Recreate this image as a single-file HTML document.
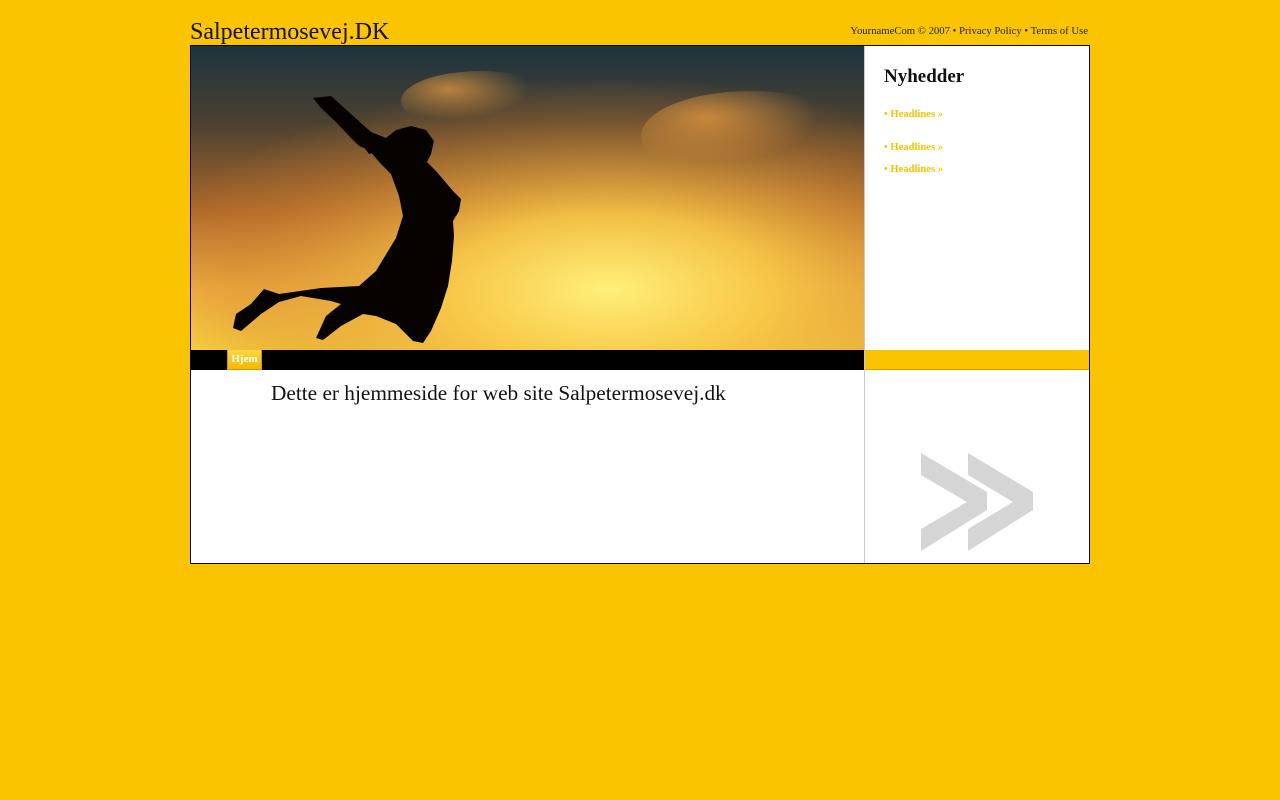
<!DOCTYPE html>
<html><head><meta charset="utf-8"><style>
*{margin:0;padding:0;box-sizing:border-box}
body{width:1280px;height:800px;background:#fac400;font-family:"Liberation Serif",serif;position:relative;overflow:hidden}
.abs{position:absolute}
#title{left:190px;top:17px;font-size:24px;color:#111;line-height:30px}
#links{left:700px;width:388px;text-align:right;top:25px;font-size:10.7px;color:#222}
#box{left:190px;top:45px;width:900px;height:519px;border:1px solid #000;background:#fff}
#img{left:191px;top:46px;width:673px;height:304px;overflow:hidden;background:linear-gradient(180deg,#1d3440 0%,#4a4030 25%,#b06a2a 55%,#f0b040 80%,#fbd640 100%)}
#nav{left:191px;top:350px;width:673px;height:20px;background:#000}
#tab{left:227px;top:350px;width:35px;height:20px;background:linear-gradient(#fcd640,#f5b800);border:1px solid #c89a00;border-top:none;color:#fff;font-weight:bold;font-size:11px;text-align:center;line-height:18px}
#ybar{left:865px;top:350px;width:224px;height:20px;background:#fac400;border-bottom:1px solid #d9a000}
#div{left:864px;top:46px;width:1px;height:517px;background:#c8c8c8}
#main{left:271px;top:381px;font-size:21.3px;color:#111}
#nyh{left:884px;top:66px;font-size:19px;font-weight:bold;color:#111}
.hl{left:884px;font-size:10.6px;font-weight:bold;color:#f7c300}
</style></head><body>
<div class="abs" id="title">Salpetermosevej.DK</div>
<div class="abs" id="links">YournameCom © 2007 • Privacy Policy • Terms of Use</div>
<div class="abs" id="box"></div>
<div class="abs" id="img">
<svg width="673" height="304" viewBox="0 0 673 304">
<defs><radialGradient id="sun" cx="0.62" cy="0.8" r="0.7"><stop offset="0" stop-color="#fff07a"/><stop offset="0.35" stop-color="#f8c848" stop-opacity="0.9"/><stop offset="0.8" stop-color="#d08030" stop-opacity="0.3"/><stop offset="1" stop-color="#d08030" stop-opacity="0"/></radialGradient>
<radialGradient id="c1" cx="0.3" cy="0.3" r="0.5"><stop offset="0" stop-color="#f0a040" stop-opacity="0.7"/><stop offset="1" stop-color="#f0a040" stop-opacity="0"/></radialGradient></defs>
<rect width="673" height="304" fill="url(#sun)"/>
<ellipse cx="290" cy="55" rx="80" ry="30" fill="url(#c1)"/>
<ellipse cx="560" cy="90" rx="110" ry="45" fill="url(#c1)"/>
<path fill="#050200" d="M122,52 L140,50 L160,68 L180,86 L195,92 L205,84 L220,80 L235,84 L243,95 L240,108 L236,116 L245,125 L262,145 L270,153 L268,165 L262,175 L263,190 L261,215 L257,240 L250,262 L240,285 L232,297 L222,295 L205,278 L185,270 L172,268 L150,280 L132,294 L125,292 L135,270 L150,258 L140,255 L110,250 L88,256 L70,268 L50,285 L42,282 L45,268 L60,258 L73,243 L88,248 L130,242 L168,240 L185,225 L205,192 L212,170 L208,150 L200,128 L190,118 L178,104 L168,100 L160,92 L145,76 L130,62 Z M170,97 L185,94 L192,105 L178,108 Z"/>
</svg></div>
<div class="abs" id="nav"></div>
<div class="abs" id="tab">Hjem</div>
<div class="abs" id="ybar"></div>
<div class="abs" id="div"></div>
<div class="abs" id="main">Dette er hjemmeside for web site Salpetermosevej.dk</div>
<div class="abs" id="nyh">Nyhedder</div>
<div class="abs hl" style="top:109px">• Headlines »</div>
<div class="abs hl" style="top:142px">• Headlines »</div>
<div class="abs hl" style="top:164px">• Headlines »</div>
<svg class="abs" style="left:0;top:0" width="1280" height="800">
<path fill="#d5d5d5" d="M921,453 L987,492 L987,510 L921,551 L921,529 L967,502 L921,475 Z M968,453 L1033,492 L1033,510 L968,551 L968,529 L1013,502 L968,475 Z"/>
</svg>
</body></html>
